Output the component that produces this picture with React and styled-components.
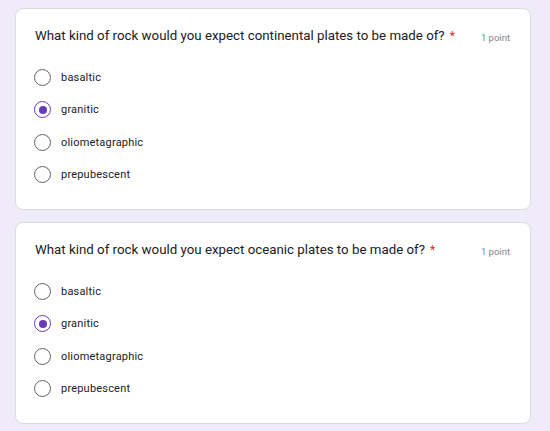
import React from "react";
import styled, { createGlobalStyle } from "styled-components";

const GlobalStyle = createGlobalStyle`
  body {
    margin: 0;
    background: #f0ebf8;
    font-family: Roboto, "Liberation Sans", Arial, sans-serif;
  }
`;

const questions = [
  {
    title: "What kind of rock would you expect continental plates to be made of?",
    options: ["basaltic", "granitic", "oliometagraphic", "prepubescent"],
    selected: 1,
  },
  {
    title: "What kind of rock would you expect oceanic plates to be made of?",
    options: ["basaltic", "granitic", "oliometagraphic", "prepubescent"],
    selected: 1,
  },
];

const Question = ({ title, options, selected }) => (
  <Card>
    <Header>
      <Title>
        {title}
        <Required>*</Required>
      </Title>
      <Points>1 point</Points>
    </Header>
    <Options>
      {options.map((opt, i) => (
        <Option key={opt}>
          <Radio $checked={i === selected} />
          <Label>{opt}</Label>
        </Option>
      ))}
    </Options>
  </Card>
);

const App = () => {
  return (
    <Page>
      <GlobalStyle />
      {questions.map((q) => (
        <Question key={q.title} {...q} />
      ))}
    </Page>
  );
};

const Page = styled.div`
  display: flex;
  flex-direction: column;
  gap: 12px;
  padding: 8px 19px 8px 15px;
`;

const Card = styled.div`
  background: #fff;
  border: 1px solid #dadce0;
  border-radius: 8px;
  padding: 17px 19px 18px;
`;

const Header = styled.div`
  display: flex;
  justify-content: space-between;
  align-items: center;
  height: 18px;
`;

const Title = styled.div`
  font-size: 13.3px;
  color: #202124;
  white-space: nowrap;
`;

const Required = styled.span`
  color: #d93025;
  margin-left: 5px;
  font-size: 12px;
`;

const Points = styled.div`
  font-size: 9.5px;
  color: #80868b;
  padding-top: 4px;
  margin-right: 1px;
  white-space: nowrap;
`;

const Options = styled.div`
  margin-top: 17px;
  display: flex;
  flex-direction: column;
`;

const Option = styled.div`
  display: flex;
  align-items: center;
  height: 32.5px;
`;

const Radio = styled.span`
  box-sizing: border-box;
  width: 17px;
  height: 17px;
  border-radius: 50%;
  border: 1.3px solid ${(p) => (p.$checked ? "#673ab7" : "#5f6368")};
  display: flex;
  align-items: center;
  justify-content: center;
  margin-left: -1px;

  &::after {
    content: "";
    width: 8px;
    height: 8px;
    border-radius: 50%;
    background: #673ab7;
    display: ${(p) => (p.$checked ? "block" : "none")};
  }
`;

const Label = styled.span`
  margin-left: 10px;
  font-size: 11px;
  color: #202124;
  letter-spacing: 0.2px;
`;

export default App;
